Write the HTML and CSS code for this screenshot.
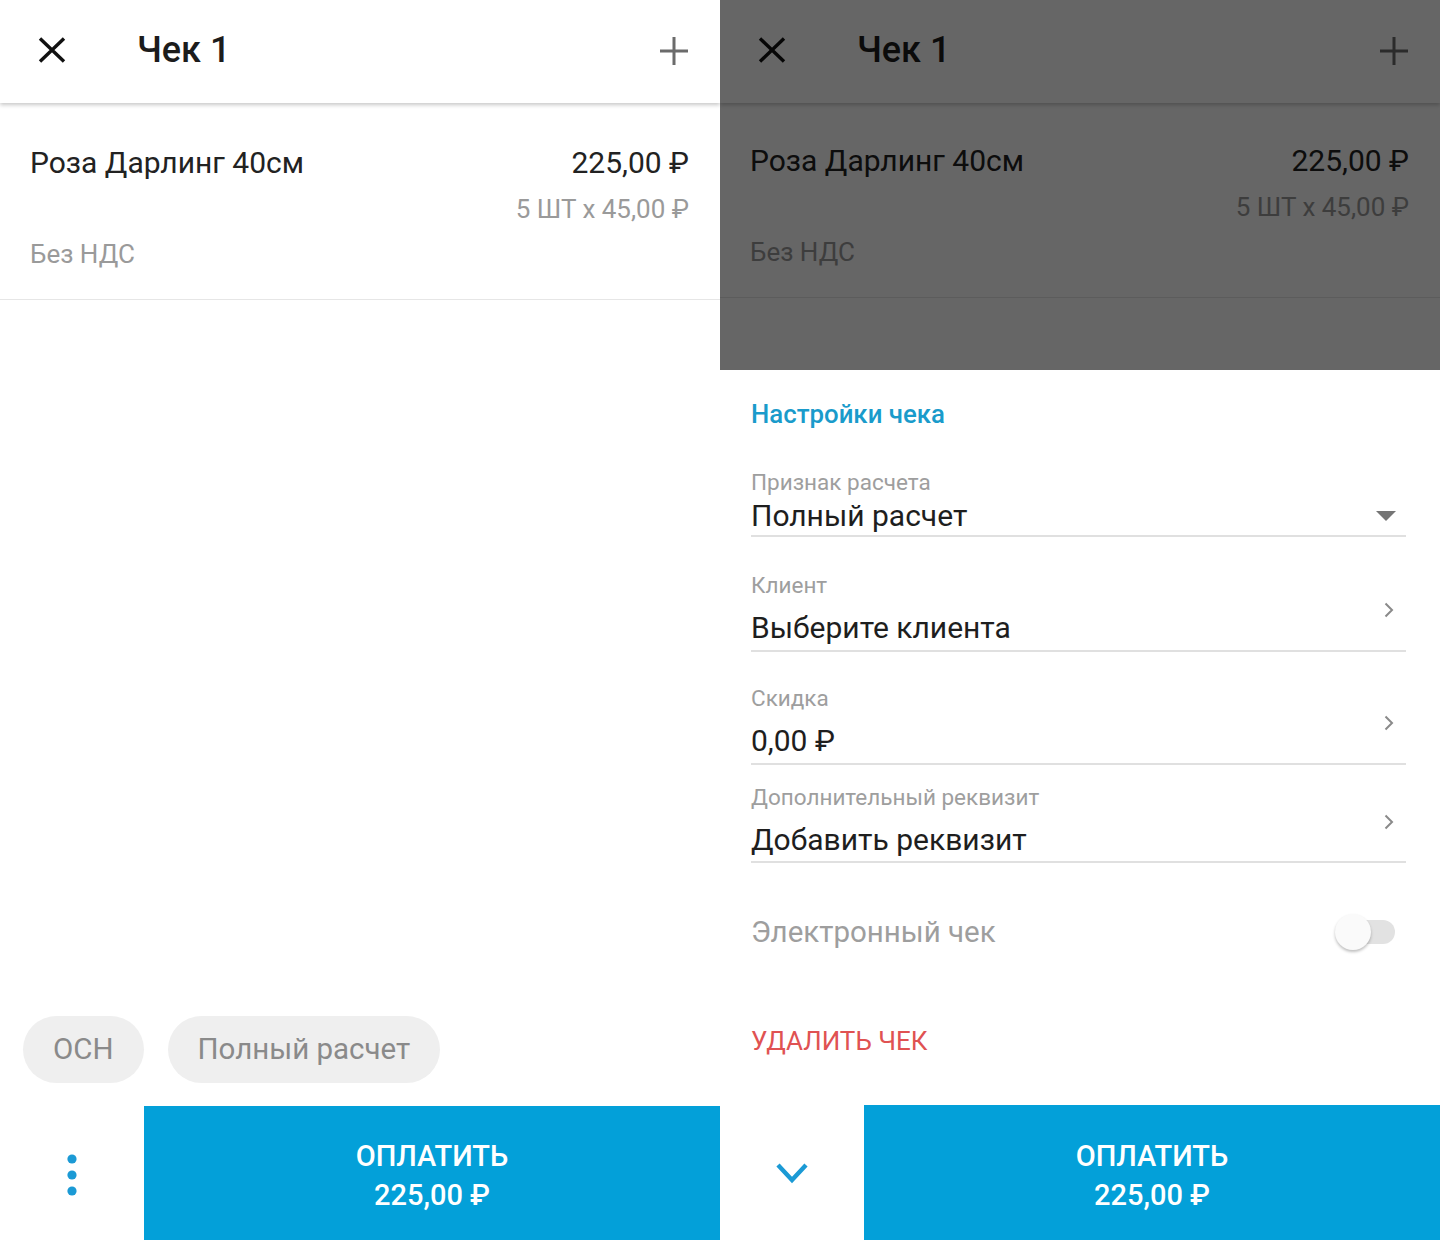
FILE: index.html
```html
<!DOCTYPE html>
<html lang="ru">
<head>
<meta charset="utf-8">
<title>Чек 1</title>
<link rel="stylesheet" href="styles.css">
</head>
<body>
<div class="screens">
  <!-- Left screen -->
  <section class="screen">
    <header class="topbar">
      <svg class="ic-close" width="28" height="26" viewBox="0 0 28 26"><path d="M2 1.5L26 24.5M26 1.5L2 24.5" stroke="#111" stroke-width="3.4" fill="none"/></svg>
      <h1 class="title">Чек 1</h1>
      <svg class="ic-plus" width="28" height="28" viewBox="0 0 28 28"><path d="M14 0V28M0 14H28" stroke="#6b6b6b" stroke-width="3" fill="none"/></svg>
    </header>
    <div class="item">
      <div class="item-row">
        <span class="item-name">Роза Дарлинг 40см</span>
        <span class="item-price">225,00 ₽</span>
      </div>
      <div class="item-qty">5 ШТ х 45,00 ₽</div>
      <div class="item-vat">Без НДС</div>
    </div>
    <div class="spacer"></div>
    <div class="chips">
      <span class="chip">ОСН</span>
      <span class="chip">Полный расчет</span>
    </div>
    <div class="paybar">
      <div class="paybar-side">
        <svg width="12" height="42" viewBox="0 0 12 42"><circle cx="6" cy="5" r="4.6" fill="#1b9ad5"/><circle cx="6" cy="21" r="4.6" fill="#1b9ad5"/><circle cx="6" cy="37" r="4.6" fill="#1b9ad5"/></svg>
      </div>
      <div class="pay">
        <span class="pay-label">ОПЛАТИТЬ</span>
        <span class="pay-sum">225,00 ₽</span>
      </div>
    </div>
  </section>

  <!-- Right screen -->
  <section class="screen screen-sheet">
    <header class="topbar">
      <svg class="ic-close" width="28" height="26" viewBox="0 0 28 26"><path d="M2 1.5L26 24.5M26 1.5L2 24.5" stroke="#111" stroke-width="3.4" fill="none"/></svg>
      <h1 class="title">Чек 1</h1>
      <svg class="ic-plus" width="28" height="28" viewBox="0 0 28 28"><path d="M14 0V28M0 14H28" stroke="#6b6b6b" stroke-width="3" fill="none"/></svg>
    </header>
    <div class="item item-under">
      <div class="item-row">
        <span class="item-name">Роза Дарлинг 40см</span>
        <span class="item-price">225,00 ₽</span>
      </div>
      <div class="item-qty">5 ШТ х 45,00 ₽</div>
      <div class="item-vat">Без НДС</div>
    </div>
    <div class="scrim"></div>
    <div class="sheet">
      <div class="sheet-body">
        <h2 class="sheet-title">Настройки чека</h2>
        <div class="field field-1">
          <div class="field-text">
            <div class="field-label">Признак расчета</div>
            <div class="field-value-row">
              <span class="field-value">Полный расчет</span>
              <svg class="ic-drop" width="20" height="10" viewBox="0 0 20 10"><path d="M0 0H20L10 10Z" fill="#757575"/></svg>
            </div>
          </div>
        </div>
        <div class="field field-link field-2">
          <div class="field-text">
            <div class="field-label">Клиент</div>
            <div class="field-value">Выберите клиента</div>
          </div>
          <svg class="ic-chev" width="10" height="16" viewBox="0 0 10 16"><path d="M1.5 1.5L8 8L1.5 14.5" stroke="#8a8a8a" stroke-width="2" fill="none"/></svg>
        </div>
        <div class="field field-link field-3">
          <div class="field-text">
            <div class="field-label">Скидка</div>
            <div class="field-value">0,00 ₽</div>
          </div>
          <svg class="ic-chev" width="10" height="16" viewBox="0 0 10 16"><path d="M1.5 1.5L8 8L1.5 14.5" stroke="#8a8a8a" stroke-width="2" fill="none"/></svg>
        </div>
        <div class="field field-link field-4">
          <div class="field-text">
            <div class="field-label">Дополнительный реквизит</div>
            <div class="field-value">Добавить реквизит</div>
          </div>
          <svg class="ic-chev" width="10" height="16" viewBox="0 0 10 16"><path d="M1.5 1.5L8 8L1.5 14.5" stroke="#8a8a8a" stroke-width="2" fill="none"/></svg>
        </div>
        <div class="switch-row">
          <span class="switch-label">Электронный чек</span>
          <span class="switch"><span class="switch-thumb"></span></span>
        </div>
        <div class="delete">УДАЛИТЬ ЧЕК</div>
      </div>
      <div class="paybar paybar-sheet">
        <div class="paybar-side">
          <svg width="34" height="22" viewBox="0 0 34 22"><path d="M3 3L17 18L31 3" stroke="#1b9ad5" stroke-width="4.4" fill="none"/></svg>
        </div>
        <div class="pay">
          <span class="pay-label">ОПЛАТИТЬ</span>
          <span class="pay-sum">225,00 ₽</span>
        </div>
      </div>
    </div>
  </section>
</div>
</body>
</html>
```

FILE: styles.css
```css
* { box-sizing: border-box; }

html, body {
  margin: 0;
  padding: 0;
  background: #ffffff;
}

body {
  font-family: Roboto, "Noto Sans", "Liberation Sans", sans-serif;
  color: #212121;
}

.screens {
  display: flex;
  width: 1440px;
  height: 1240px;
  overflow: hidden;
}

.screen {
  position: relative;
  width: 720px;
  height: 1240px;
  display: flex;
  flex-direction: column;
  background: #fff;
  overflow: hidden;
}

/* Top bar */
.topbar {
  position: relative;
  z-index: 1;
  height: 103px;
  flex: none;
  display: flex;
  align-items: center;
  padding: 0 32px 4px 38px;
  background: #fff;
  box-shadow: 0 2px 4px rgba(0, 0, 0, 0.22);
}

.ic-close { flex: none; }

.title {
  margin: 0 0 0 71px;
  font-size: 36px;
  font-weight: 500;
  line-height: 44px;
  color: #1c1c1c;
  flex: 1;
}

.ic-plus { flex: none; margin-top: 2px; }

/* Item */
.item {
  padding: 42px 31px 30px 30px;
  border-bottom: 1px solid #e6e6e6;
}

.item-row {
  display: flex;
  justify-content: space-between;
  align-items: center;
  line-height: 36px;
  font-size: 30px;
  color: #222;
}

.item-qty {
  margin-top: 13px;
  text-align: right;
  font-size: 26px;
  line-height: 30px;
  color: #9a9a9a;
}

.item-vat {
  margin-top: 15px;
  font-size: 26px;
  line-height: 30px;
  color: #9a9a9a;
}

.spacer { flex: 1; }

/* Chips */
.chips {
  display: flex;
  gap: 24px;
  padding-left: 23px;
  margin-bottom: 23px;
}

.chip {
  height: 67px;
  padding: 0 30px;
  border-radius: 34px;
  background: #efefef;
  color: #8a8a8a;
  font-size: 29.5px;
  line-height: 67px;
}

/* Pay bar */
.paybar {
  display: flex;
  height: 134px;
  flex: none;
}

.paybar-side {
  width: 144px;
  flex: none;
  display: flex;
  align-items: center;
  justify-content: center;
  padding-top: 4px;
}

.pay {
  flex: 1;
  background: #03a0d9;
  color: #fff;
  display: flex;
  flex-direction: column;
  align-items: center;
  justify-content: center;
  font-size: 29px;
  font-weight: 500;
  line-height: 39px;
  padding-top: 6px;
}

/* Right screen: dimmed background + bottom sheet */
.item-under { padding-top: 40px; }

.scrim {
  position: absolute;
  inset: 0;
  z-index: 2;
  background: rgba(0, 0, 0, 0.6);
}

.sheet {
  position: absolute;
  z-index: 3;
  left: 0;
  right: 0;
  top: 370px;
  bottom: 0;
  background: #fff;
  display: flex;
  flex-direction: column;
}

.sheet-body {
  flex: 1;
  padding: 29px 34px 0 31px;
}

.sheet-title {
  margin: 0;
  font-size: 25.8px;
  font-weight: 500;
  line-height: 30px;
  color: #1a9bcb;
}

.field {
  display: flex;
  align-items: center;
  border-bottom: 2px solid #e0e0e0;
}

.field-text { flex: 1; }

.field-label {
  font-size: 22.5px;
  line-height: 24px;
  color: #9e9e9e;
}

.field-value {
  font-size: 30px;
  line-height: 36px;
  color: #1e1e1e;
}

.field-value-row {
  display: flex;
  align-items: center;
  justify-content: space-between;
  padding-right: 10px;
}

.field-1 { margin-top: 41px; padding-bottom: 1px; }
.field-1 .field-value-row { margin-top: 4px; }

.field-link { padding-right: 12px; }
.field-link .field-value { margin-top: 13px; }
.field-2 { margin-top: 36px; padding-bottom: 4px; }
.field-3 { margin-top: 34px; padding-bottom: 4px; }
.field-4 { margin-top: 20px; padding-bottom: 3px; }

.ic-chev { flex: none; }

.switch-row {
  margin-top: 49px;
  display: flex;
  align-items: center;
  justify-content: space-between;
  padding-right: 11px;
  height: 40px;
}

.switch-label {
  font-size: 29.5px;
  color: #9e9e9e;
}

.switch {
  position: relative;
  width: 58px;
  height: 24px;
  border-radius: 12px;
  background: #e2e2e2;
}

.switch-thumb {
  position: absolute;
  left: -2px;
  top: -6px;
  width: 36px;
  height: 36px;
  border-radius: 50%;
  background: #fafafa;
  box-shadow: 0 2px 3px rgba(0, 0, 0, 0.25);
}

.delete {
  margin-top: 72px;
  font-size: 26px;
  line-height: 34px;
  color: #e05252;
}

.paybar-sheet { height: 135px; }
.paybar-sheet .paybar-side { padding-top: 0; }
```
